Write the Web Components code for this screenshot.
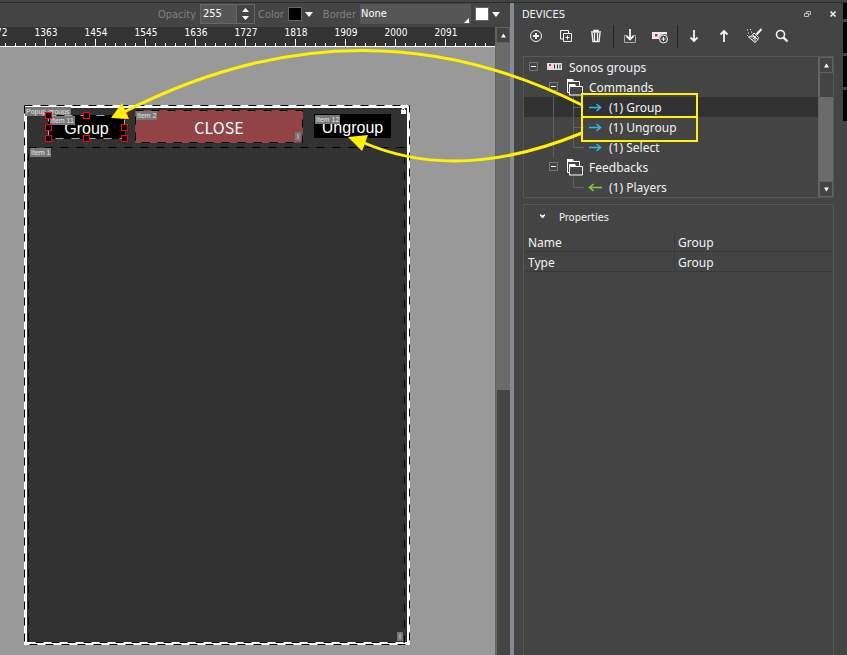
<!DOCTYPE html>
<html lang="en">
<head>
<meta charset="utf-8">
<title>Interface designer</title>
<style>
  html, body { margin: 0; height: 100%; background: #444; }
  body { font: 12px/20px "Noto Sans", "Open Sans", sans-serif; color: #f2f2f2; overflow: hidden;
    --caption: "DejaVu Sans Condensed", "DejaVu Sans", sans-serif; --line: #565656; --note: #fff200; }
</style>
</head>
<body>
<app-shell></app-shell>
<script>
const define = (name, html, setup) => {
  const template = document.createElement('template');
  template.innerHTML = html;
  customElements.define(name, class extends HTMLElement {
    constructor() {
      super();
      this.attachShadow({ mode: 'open' }).append(template.content.cloneNode(true));
    }
    connectedCallback() { if (setup) setup(this, this.shadowRoot); }
  });
};

define('scroll-bar', `
<style>
  :host { display: flex; flex-direction: column; box-sizing: border-box; width: 15px; background: #6b6b6b; border-left: 1px solid #636363; }
  button { all: unset; display: grid; place-items: center; height: 16px; flex: none; box-sizing: border-box; background: #444; border: 1px solid #606060; }
  .before { flex: var(--before, 0); }
  .thumb { flex: var(--thumb, 1); background: #444; margin-left: 1px; }
  .after { flex: var(--after, 1); }
  :host([no-end]) .end { display: none; }
  svg { display: block; }
</style>
<button aria-label="Scroll up"><svg width="7" height="5"><path d="M3.5 0.500L6 4.500H1z" fill="#fff"/></svg></button>
<div class="before"></div><div class="thumb"></div><div class="after"></div>
<button class="end" aria-label="Scroll down"><svg width="7" height="5"><path d="M1 0.500h5L3.500 4.500z" fill="#fff"/></svg></button>
`);

define('color-swatch', `
<style>
  :host { display: block; }
  button { all: unset; display: flex; align-items: center; gap: 3px; }
  i { width: 12px; height: 12px; border: 1px solid #666; background: var(--swatch); }
  svg { display: block; }
</style>
<button><i></i><svg width="8" height="5"><path d="M0 0h8L4 5z" fill="#fff"/></svg></button>
`, (el, root) => root.querySelector('button').setAttribute('aria-label', el.getAttribute('label')));

define('style-toolbar', `
<style>
  :host { display: flex; justify-content: flex-end; align-items: center; height: 24px; padding: 0 10px 2px 0; box-sizing: border-box;
    font: 11px/19px var(--caption); color: #808080; background: #444; }
  .spin { display: flex; height: 18px; margin: 0 3px 0 4px; border: 1px solid #666; background: #565656; }
  input { width: 35px; box-sizing: border-box; padding: 0 2px; border: 0; background: none; color: #fff; font: 11px/18px var(--caption); outline: 0; }
  .steps { display: flex; flex-direction: column; justify-content: space-evenly; width: 17px; background: #444; border-left: 1px solid #666; }
  .steps button { all: unset; display: grid; place-items: center; }
  .select { position: relative; width: 111px; height: 20px; margin: 0 4px; }
  select { appearance: none; display: block; width: 100%; height: 100%; border: 0; border-radius: 0; padding: 0 1px; background: #565656; color: #fff; font: 11px/20px var(--caption); }
  .select svg { position: absolute; right: 2px; bottom: 1px; }
  .c1 { margin: 0 10px 0 4px; }
</style>
<label for="op">Opacity</label>
<div class="spin"><input id="op" value="255"><div class="steps">
  <button aria-label="Increase"><svg width="7" height="4"><path d="M3.500 0L7 4H0z" fill="#fff"/></svg></button>
  <button aria-label="Decrease"><svg width="7" height="4"><path d="M0 0h7L3.500 4z" fill="#fff"/></svg></button></div></div>
<span>Color</span><color-swatch class="c1" label="Color" style="--swatch:#000"></color-swatch>
<label for="bd">Border</label>
<div class="select"><select id="bd"><option>None</option></select><svg width="5" height="5"><path d="M5 0v5H0z" fill="#fff"/></svg></div>
<color-swatch label="Border color" style="--swatch:#fff"></color-swatch>
`);

define('ruler-bar', `
<style>
  :host { display: block; overflow: hidden; height: 20px; box-sizing: border-box; border-bottom: 1px solid #fff; color: #fff; font: 10px/12px var(--caption);
    background:
      repeating-linear-gradient(90deg, transparent 0 45px, #fff 45px 46px, transparent 46px 50px) 0 100% / 100% 7px no-repeat,
      repeating-linear-gradient(90deg, transparent 0 5px, #fff 5px 6px, transparent 6px 10px) 0 100% / 100% 3px no-repeat, #333; }
  div { display: flex; margin-left: -29px; }
  span { flex: none; width: 50px; text-align: center; }
</style><div></div>
`, (el, root) => {
  root.querySelector('div').innerHTML = el.getAttribute('marks').split(' ').map(n => `<span>${n}</span>`).join('');
});

define('canvas-item', `
<style>
  :host { position: absolute; display: grid; place-items: center; box-sizing: border-box; background: var(--fill, transparent); color: #fff;
    font: 16px/20px "Liberation Sans", sans-serif; padding-top: 3px; }
  .dash { position: absolute; inset: 0; width: 100%; height: 100%; overflow: visible; }
  .dash rect { width: calc(100% - 1px); height: calc(100% - 1px); fill: none; stroke: var(--dash, #000); stroke-dasharray: 8 8; }
  .tag, .mark { position: absolute; background: #777; color: #e4e4e4; font: 7px/9px "Liberation Sans", sans-serif; white-space: nowrap; padding: 0 1px; }
  .tag { left: var(--tag-x, 1px); top: var(--tag-y, 1px); }
  .mark { right: 2px; bottom: 2px; padding: 0 2px; }
  .mark:empty { display: none; }
</style>
<slot></slot><svg class="dash"><rect x="0.5" y="0.5"/></svg><span class="tag"></span><span class="mark"></span><slot name="over"></slot>
`, (el, root) => {
  root.querySelector('.tag').textContent = el.getAttribute('tag');
  root.querySelector('.mark').textContent = el.getAttribute('mark') || '';
});

define('selection-handles', `
<style>
  :host { position: absolute; inset: -3px; place-self: stretch; display: grid; grid-template-columns: repeat(3, 1fr); align-content: space-between; }
  i { width: 5px; height: 5px; border: 1px solid #f00; background: #000; justify-self: center; }
  i:nth-of-type(3n+1) { justify-self: start; }
  i:nth-of-type(3n) { justify-self: end; }
  .none { visibility: hidden; }
</style><i></i><i></i><i></i><i></i><i class="none"></i><i></i><i></i><i></i><i></i>
`);

define('design-canvas', `
<style>
  :host { display: block; position: relative; overflow: hidden; background: #999; }
  .popup { left: 24px; top: 58px; width: 386px; height: 540px; box-shadow: inset 0 0 0 3px #fff; }
  .lock { position: absolute; right: 4px; top: 3px; }
  .close { left: 135px; top: 63px; width: 168px; height: 33px; font: 16px/20px "Noto Sans CJK JP", sans-serif; padding-top: 5px; }
</style>
<canvas-item class="popup" tag="Popup groups" style="--fill:#323232;--tag-y:2px"><svg slot="over" class="lock" width="5" height="6"><path d="M0 2h5v4H0z" fill="#fff"/><path d="M1 2V0.500h2.500V2" fill="none" stroke="#fff"/></svg></canvas-item>
<canvas-item tag="Item 1" mark="I" style="left:28px;top:100px;width:377px;height:496px;--tag-x:2px"></canvas-item>
<canvas-item class="close" tag="Item 2" mark="I" style="--fill:#924345">CLOSE</canvas-item>
<canvas-item tag="Item 12" style="left:314px;top:67px;width:77px;height:24px;--fill:#000"><span>Ungroup</span></canvas-item>
<canvas-item tag="Item 11" style="left:48px;top:68px;width:77px;height:24px;--fill:#000;--dash:#aaa;--tag-x:2px"><span>Group</span><selection-handles slot="over"></selection-handles></canvas-item>
`);

const ICONS = {
  add: '<circle cx="8" cy="8" r="5.500"/><path d="M8 5v6M5 8h6" stroke-width="2"/>',
  copy: '<path d="M5 11H2.500V2.500h8V5M5.500 5.500h8v8h-8zM9.500 7.500v4M7.500 9.500h4"/>',
  bin: '<path d="M3 4h10M6 3.500V2.500h4v1M4 5l1 8.500h6L12 5" stroke-width="1.400"/><path d="M6.500 5v8M9.500 5v8" stroke-width="1.200"/>',
  load: '<path d="M5 7.500H2.500v7h11v-7H11" stroke="#aaa"/><path d="M8 1v10M4.500 8L8 11.500 11.500 8" stroke-width="1.800"/>',
  device: '<path d="M0 4h15v3a5 5 0 0 0-8 4H0z" fill="#eee" stroke="none"/><path d="M3 6h2.500v2.500H3z" fill="#c22" stroke="none"/><circle cx="11.500" cy="11" r="4" fill="#444"/><path d="M11.500 9v4M9.500 11h4"/>',
  down: '<path d="M8 2v11M4.500 9.500L8 13l3.500-3.500" stroke-width="1.800"/>',
  up: '<path d="M8 14V3M4.500 6.500L8 3l3.500 3.500" stroke-width="1.800"/>',
  brush: '<path d="M15.500 1l-5 5.500" stroke-width="2"/><path d="M8 5l4.500 4.500c-.5 2-1.500 3.500-3.500 5L2.500 9C5 8.500 7 7 8 5zM6.500 6.500l5 5M4.500 9l5 -.5M6.500 11.500l3-3M9 13.500V9"/><path d="M1 2h1M4 1.500h1M2 5h1M5 4h1M1 7.500h1"/>',
  find: '<circle cx="6.500" cy="6.500" r="4" stroke-width="1.600"/><path d="M9.500 9.500l4 4" stroke-width="2.400"/>'
};
define('tool-button', `
<style>
  :host { display: block; }
  button { all: unset; display: grid; place-items: center; width: 30px; height: 22px; }
  svg { fill: none; stroke: #f2f2f2; overflow: visible; }
</style><button><svg width="16" height="16"></svg></button>
`, (el, root) => {
  const icon = el.getAttribute('icon');
  root.querySelector('button').setAttribute('aria-label', icon);
  root.querySelector('svg').innerHTML = ICONS[icon];
});

const GUIDES = {
  v: '<path d="M9.500 0v20"/>', t: '<path d="M9.500 0v20M10 10.500h10"/>', l: '<path d="M9.500 0v10.500h11"/>', o: '',
  x: '<path d="M5.500 5.500h8v8h-8z" stroke="#777"/><path d="M7 9.500h5" stroke="#fff"/>'
};
const GLYPHS = {
  unit: '<path d="M3 6h15v7H3z" fill="#ddd"/><path d="M5 7h2v2H5z" fill="#d33"/><path d="M10.500 7.500v4M13.500 7.500v4M16 7.500v4" stroke="#333"/>',
  folder: '<path d="M3 2h6l1 3H3zM5 7h6l1 3H5z" fill="#fff"/><path d="M6 15.500H3.500v-11h12V9" stroke="#fff"/><path d="M5.500 9.500h13v8.500h-13z" fill="#444" stroke="#fff"/><path d="M5 7h6l1 3H5z" fill="#fff"/>',
  out: '<path d="M5 10.500h11M12.500 7l4 3.500-4 3.500" stroke="#30b4e8" stroke-width="1.600" fill="none"/>',
  in: '<path d="M18 10.500H6M9.500 7l-4 3.500 4 3.500" stroke="#8bc53f" stroke-width="1.600" fill="none"/>'
};
define('tree-row', `
<style>
  :host { display: flex; height: 20px; line-height: 22px; white-space: nowrap; }
  :host([selected]) { background: #313131; }
  svg { display: block; flex: none; height: 20px; width: 20px; fill: none; stroke: #606060; }
  svg.glyph { width: 25px; stroke: none; }
</style><slot></slot>
`, (el, root) => {
  const guides = [...el.getAttribute('guides')].map(g => `<svg>${GUIDES[g]}</svg>`).join('');
  root.querySelector('slot').insertAdjacentHTML('beforebegin', `${guides}<svg class="glyph">${GLYPHS[el.getAttribute('glyph')]}</svg>`);
  el.setAttribute('role', 'treeitem');
});

define('device-tree', `
<style>
  :host { display: flex; border: 1px solid var(--line); }
  .rows { flex: 1; min-width: 0; }
</style>
<div class="rows" role="tree">
  <tree-row guides="x" glyph="unit">Sonos groups</tree-row>
  <tree-row guides="ox" glyph="folder">Commands</tree-row>
  <tree-row guides="ovt" glyph="out" selected>(1) Group</tree-row>
  <tree-row guides="ovt" glyph="out">(1) Ungroup</tree-row>
  <tree-row guides="ovl" glyph="out">(1) Select</tree-row>
  <tree-row guides="ox" glyph="folder">Feedbacks</tree-row>
  <tree-row guides="ool" glyph="in">(1) Players</tree-row>
</div>
<scroll-bar style="--thumb:24;--after:84"></scroll-bar>
`);

define('properties-panel', `
<style>
  :host { display: block; border: 1px solid var(--line); border-bottom: 0; }
  button { all: unset; display: flex; align-items: center; gap: 13px; height: 24px; padding-left: 15px; font: 11px/25px var(--caption); }
  svg { margin-bottom: 2px; }
  table { width: calc(100% - 2px); margin: 3px 1px 0; border-collapse: collapse; table-layout: fixed; }
  th, td { height: 17px; padding: 2px 3px 0; text-align: left; font-weight: 400; line-height: 17px; border-bottom: 1px solid #393939; }
  th { width: 143px; border-right: 1px solid #393939; }
</style>
<button aria-expanded="true"><svg width="7" height="5"><path d="M1 0l2.500 1.500L6 0v1.500L3.500 4.500 1 1.500z" fill="#fff"/></svg>Properties</button>
<table><tr><th scope="row">Name</th><td>Group</td></tr><tr><th scope="row">Type</th><td>Group</td></tr></table>
`);

define('devices-panel', `
<style>
  :host { display: flex; flex-direction: column; padding: 0 9px; background: #444; }
  header { display: flex; align-items: center; height: 22px; margin-right: -3px; }
  h2 { flex: 1; margin: 0 0 0 -1px; font: 11px/23px var(--caption); }
  header button { all: unset; display: grid; place-items: center; width: 8px; height: 16px; margin-left: 18px; }
  header svg { fill: none; stroke: #eee; }
  nav { display: flex; height: 22px; margin: 0 0 9px -2px; }
  hr { flex: none; width: 1px; height: 23px; margin: 0 1px 0 2px; border: 0; background: #222; }
  tool-button:last-child { margin-left: -2px; }
  properties-panel { flex: 1; margin-top: 6px; }
</style>
<header><h2>DEVICES</h2>
  <button aria-label="Float"><svg width="7" height="7"><path d="M2.500 2V0.500h4v3H5M0.500 2.500h4v3h-4z" stroke="#bbb"/></svg></button>
  <button aria-label="Close"><svg width="8" height="8"><path d="M1.500 1.500l5 5M6.500 1.500l-5 5" stroke-width="1.600"/></svg></button></header>
<nav><tool-button icon="add"></tool-button><tool-button icon="copy"></tool-button><tool-button icon="bin"></tool-button><hr>
  <tool-button icon="load"></tool-button><tool-button icon="device"></tool-button><hr>
  <tool-button icon="down"></tool-button><tool-button icon="up"></tool-button><tool-button icon="brush"></tool-button><tool-button icon="find"></tool-button></nav>
<device-tree></device-tree>
<properties-panel></properties-panel>
`);

define('note-layer', `
<style>
  :host { position: absolute; inset: 0; pointer-events: none; }
  svg { width: 100%; height: 100%; display: block; fill: none; stroke: var(--note); }
</style>
<svg><path d="M582 94h115v47H582zM582 117h115" stroke-width="2"/>
<path d="M582 105Q357-8 122 113M582 133Q458 184 362 142" stroke-width="3"/>
<path d="M111 118l11-15 7 16zM348 137l20-2-6 16z" fill="#fff200" stroke="none"/></svg>
`);

define('app-shell', `
<style>
  :host { position: relative; display: grid; height: 100vh; box-sizing: border-box; grid-template-columns: minmax(0, 1fr) 4px minmax(0, 329px) 4px; grid-template-rows: 3px minmax(0, 1fr); }
  .top { grid-column: 1 / -1; background: linear-gradient(#444 2px, #2c2c2c 2px); }
  .work { display: grid; grid-template: auto auto minmax(0, 1fr) / minmax(0, 1fr) 15px; }
  style-toolbar { grid-column: 1 / -1; }
  scroll-bar { grid-area: 2 / 2 / 4 / 3; --before: 347; --thumb: 265; --after: 0; }
  .split { background: #868a93; }
  .edge { display: flex; flex-direction: column; gap: 3px; background: #444; }
  .edge i { height: 31px; background: #000; }
  .edge i:first-child { height: 16px; }
</style>
<div class="top"></div>
<div class="work"><style-toolbar></style-toolbar>
  <ruler-bar marks="1272 1363 1454 1545 1636 1727 1818 1909 2000 2091"></ruler-bar>
  <scroll-bar no-end></scroll-bar><design-canvas></design-canvas></div>
<div class="split"></div>
<devices-panel></devices-panel>
<div class="edge"><i></i><i></i><i></i><i></i></div>
<note-layer></note-layer>
`);
</script>
</body>
</html>
